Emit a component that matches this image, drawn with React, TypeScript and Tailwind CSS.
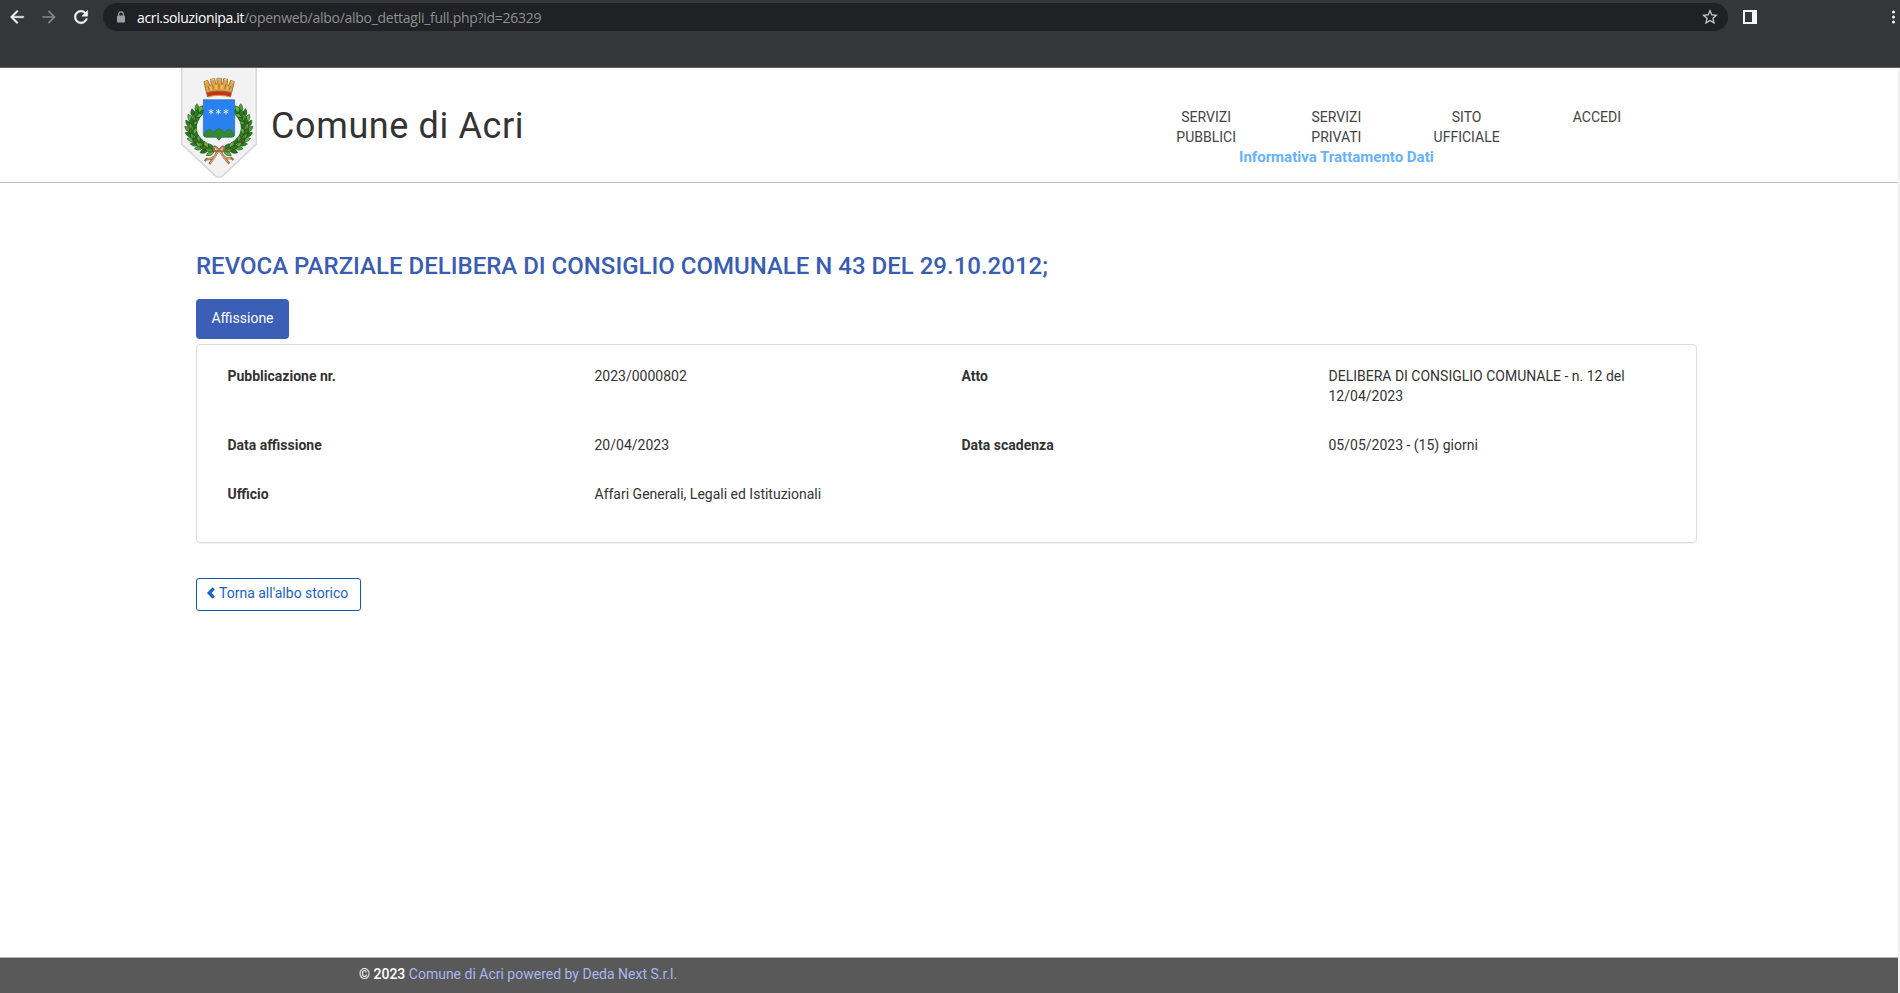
import React from "react";

type Leaf = { x: number; y: number; angle: number; tone: string };

const tones = ["#4ba536", "#23781f", "#62b840", "#2a7f27"];

function wreathLeaves(): Leaf[] {
  const leaves: Leaf[] = [];
  const steps = 11;
  for (let i = 0; i < steps; i++) {
    const t = i / (steps - 1);
    const u = 1 - t;
    const p = [[82, 158], [44, 205], [72, 262], [132, 272]];
    const x = u * u * u * p[0][0] + 3 * u * u * t * p[1][0] + 3 * u * t * t * p[2][0] + t * t * t * p[3][0];
    const y = u * u * u * p[0][1] + 3 * u * u * t * p[1][1] + 3 * u * t * t * p[2][1] + t * t * t * p[3][1];
    const dx = 3 * u * u * (p[1][0] - p[0][0]) + 6 * u * t * (p[2][0] - p[1][0]) + 3 * t * t * (p[3][0] - p[2][0]);
    const dy = 3 * u * u * (p[1][1] - p[0][1]) + 6 * u * t * (p[2][1] - p[1][1]) + 3 * t * t * (p[3][1] - p[2][1]);
    const back = (Math.atan2(-dy, -dx) * 180) / Math.PI;
    leaves.push({ x, y, angle: back - 42, tone: tones[i % 4] });
    leaves.push({ x, y, angle: back + 42, tone: tones[(i + 1) % 4] });
    leaves.push({ x, y, angle: back, tone: tones[(i + 2) % 4] });
  }
  return leaves;
}

const leaves = wreathLeaves();

function Branch() {
  return (
    <g>
      {leaves.map((l, i) => (
        <g key={i} transform={`translate(${l.x} ${l.y}) rotate(${l.angle})`}>
          <path d="M0 0Q12 -13 27 0Q12 12 0 0Z" fill={l.tone} stroke="#123c12" strokeWidth="1.6" />
        </g>
      ))}
      <path d="M80 160C44 205 72 262 132 272" fill="none" stroke="#6b4a24" strokeWidth="2.5" />
      <circle cx="60" cy="205" r="3" fill="#a83a2a" />
      <circle cx="78" cy="242" r="3" fill="#a83a2a" />
      <circle cx="104" cy="262" r="3" fill="#a83a2a" />
    </g>
  );
}

function Crest() {
  return (
    <svg className="block h-[111px] w-[76px] shrink-0" viewBox="33 24 228 333">
      <path d="M33 24H261V254L158 351Q147 357 136 351L33 254Z" fill="#d9d9d9" />
      <path d="M39 24H255V251L155 345Q147 350 139 345L39 251Z" fill="#f2f2f2" stroke="#fafafa" strokeWidth="2" />
      <Branch />
      <g transform="translate(293 0) scale(-1 1)">
        <Branch />
      </g>
      <path d="M100 119H194V222Q194 232 184 232H155L147 241L139 232H110Q100 232 100 222Z" fill="#2a80ee" stroke="#17579e" strokeWidth="1.5" />
      <path d="M101 225Q108 210 118 207Q126 210 131 218Q138 207 147 205Q156 207 163 218Q169 210 177 207Q187 210 193 225Q193 231 184 231H155L147 240L139 231H110Q101 231 101 225Z" fill="#348a2c" stroke="#1c6322" strokeWidth="1" />
      {[123, 145, 168].map((x) => (
        <path
          key={x}
          transform={`translate(${x} 155)`}
          d="M0 -8V8M-7 -4L7 4M-7 4L7 -4"
          stroke="#dcecff"
          strokeWidth="3"
        />
      ))}
      <path d="M109 98L102 65L113 61L119 76L124 74L122 58L134 56L137 72H141V55H154V72H158L161 56L173 58L171 74L176 76L182 61L193 65L185 98Q147 88 109 98Z" fill="#e0a748" stroke="#7d4a12" strokeWidth="2" />
      <path d="M114 78L118 91M128 74L130 88M147 71V87M167 74L165 88M181 78L177 91" stroke="#96601e" strokeWidth="2.5" />
      <path d="M104 67L112 64M124 60L133 58M143 57H152M162 58L171 60M183 64L191 67M121 80L124 89M138 76L139 86M156 76L155 86M174 80L171 89" stroke="#f6d27a" strokeWidth="3" />
      <path d="M110 99Q147 89 184 99L182 110Q147 100 112 110Z" fill="#cf2a1e" stroke="#8c5a18" strokeWidth="2" />
      <path d="M114 111Q147 101 180 111" fill="none" stroke="#d99a34" strokeWidth="3" />
      <g fill="none">
        <path
          d="M147 271Q131 250 132 268Q134 279 147 271Q163 250 162 268Q160 279 147 271M143 274Q132 300 110 297L104 303M143 275Q134 292 118 312M151 274Q162 300 184 294L190 300M151 275Q160 292 178 311"
          stroke="#9a6d45"
          strokeWidth="7"
        />
        <path
          d="M143 276Q133 296 112 298M151 276Q161 296 182 296M133 263Q139 262 145 270M161 263Q155 262 149 270M138 288L121 309M156 288L175 308"
          stroke="#dfbd92"
          strokeWidth="3"
        />
      </g>
    </svg>
  );
}

function BrowserBar() {
  return (
    <div className="flex h-[68px] shrink-0 items-start border-b border-[#606164] bg-[#35363a]">
      <div className="flex h-[34px] w-[103px] shrink-0 items-center gap-3 pl-[7px]">
        <svg className="size-5 shrink-0" viewBox="0 0 24 24" fill="#f1f3f4" stroke="#f1f3f4" strokeWidth="0.5">
          <path d="M20 11H7.83l5.59-5.59L12 4l-8 8 8 8 1.41-1.41L7.83 13H20v-2z" />
        </svg>
        <svg className="size-5 shrink-0" viewBox="0 0 24 24" fill="#85868a">
          <path d="M12 4l-1.41 1.41L16.17 11H4v2h12.17l-5.58 5.59L12 20l8-8z" />
        </svg>
        <svg className="size-5 shrink-0" viewBox="0 0 24 24" fill="#f1f3f4" stroke="#f1f3f4" strokeWidth="0.6">
          <path d="M17.65 6.35C16.2 4.9 14.21 4 12 4c-4.42 0-7.99 3.58-7.99 8s3.57 8 7.99 8c3.73 0 6.84-2.55 7.73-6h-2.08c-.82 2.33-3.04 4-5.65 4-3.31 0-6-2.69-6-6s2.69-6 6-6c1.66 0 3.14.69 4.22 1.78L13 11h7V4l-2.35 2.35z" />
        </svg>
      </div>
      <div className="mt-[3px] flex h-7 w-[1625px] shrink-0 items-center justify-between rounded-full bg-[#202124] pr-2.5 pl-[13px]">
        <div className="flex items-center">
          <svg className="block h-3 w-2.5" viewBox="0 0 10 12">
            <path d="M2.7 5V3.2a2.3 2.3 0 0 1 4.6 0V5" fill="none" stroke="#9aa0a6" strokeWidth="1.2" />
            <rect x="1" y="4.4" width="8" height="7.2" rx="0.8" fill="#9aa0a6" />
          </svg>
          <span className="ml-[11px] pt-px text-[14px] leading-5 font-normal whitespace-nowrap text-[#8d9094] [font-family:'Open_Sans','Noto_Sans',sans-serif]">
            <span className="inline-block w-[107px] tracking-[-0.35px] text-white">acri.soluzionipa.it</span>
            <span className="tracking-[-0.28px]">/openweb/albo/albo_dettagli_full.php?id=26329</span>
          </span>
        </div>
        <svg className="block size-4" viewBox="2 2 20 20" fill="#c4c7cb">
          <path d="M22 9.24l-7.19-.62L12 2 9.19 8.63 2 9.24l5.46 4.73L5.82 21 12 17.27 18.18 21l-1.63-7.03L22 9.24zM12 15.4l-3.76 2.27 1-4.28-3.32-2.88 4.38-.38L12 6.1l1.71 4.04 4.38.38-3.32 2.88 1 4.28L12 15.4z" />
        </svg>
      </div>
      <div className="flex h-[34px] flex-1 items-center justify-between pr-[5px] pl-[15px]">
        <svg className="block size-3.5" viewBox="0 0 14 14">
          <path d="M0 0H14V14H0ZM2 2V12H9V2Z" fill="#f4f5f7" fillRule="evenodd" />
        </svg>
        <svg className="block h-3.5 w-[3px]" viewBox="0 0 3 14" fill="#f1f3f4">
          <circle cx="1.5" cy="2" r="1.5" />
          <circle cx="1.5" cy="7" r="1.5" />
          <circle cx="1.5" cy="12" r="1.5" />
        </svg>
      </div>
    </div>
  );
}

const nav = [
  ["SERVIZI", "PUBBLICI"],
  ["SERVIZI", "PRIVATI"],
  ["SITO", "UFFICIALE"],
  ["ACCEDI"],
];

function Header() {
  return (
    <header className="flex h-[115px] shrink-0 items-start border-b border-[#bbbbbb] pl-[181px]">
      <Crest />
      <h1 className="mt-[34px] ml-[14px] w-[870px] text-[36px] leading-[48px] font-normal tracking-[0.62px] text-[#333333]">Comune di Acri</h1>
      <nav className="mt-[39px] w-[521px]">
        <ul className="flex h-10 text-center text-[14px] leading-5 text-[#444444]">
          {nav.map((words, i) => (
            <li key={i} className="w-[130.4px]">
              {words.map((w) => (
                <div key={w}>{w}</div>
              ))}
            </li>
          ))}
        </ul>
        <a className="ml-[98px] block text-[15px] leading-5 font-bold text-[#66b2ff]">Informativa Trattamento Dati</a>
      </nav>
    </header>
  );
}

const rows = [
  ["Pubblicazione nr.", "2023/0000802", "Atto", "DELIBERA DI CONSIGLIO COMUNALE - n. 12 del 12/04/2023"],
  ["Data affissione", "20/04/2023", "Data scadenza", "05/05/2023 - (15) giorni"],
  ["Ufficio", "Affari Generali, Legali ed Istituzionali", "", ""],
];

function Details() {
  return (
    <section className="mt-[5px] flex h-[199px] w-[1501px] flex-col gap-[29px] rounded-[4px] border border-[#dddddd] pt-[21px] pl-[30.5px] text-[14px] leading-5 text-[#333333] shadow-[0_1px_1px_rgba(0,0,0,0.05)]">
      {rows.map((cells, r) => (
        <div key={r} className="flex">
          {cells.map((cell, c) => (
            <div key={c} className={c % 2 === 0 ? "w-[367px] shrink-0 font-bold" : "w-[367px] shrink-0 pr-[50px]"}>
              {cell}
            </div>
          ))}
        </div>
      ))}
    </section>
  );
}

export default function App() {
  return (
    <div className="flex h-[993px] w-[1900px] flex-col overflow-hidden bg-white [font-family:Roboto,'Liberation_Sans',sans-serif]">
      <BrowserBar />
      <div className="flex flex-1 border-r-2 border-[#f1f1f1]">
        <div className="flex flex-1 flex-col">
          <Header />
          <main className="flex-1 pl-[196px]">
            <h2 className="pt-[69px] text-[24px] leading-[28px] font-medium whitespace-nowrap text-[#3a5db4]">
              REVOCA PARZIALE DELIBERA DI CONSIGLIO COMUNALE N 43 DEL 29.10.2012;
            </h2>
            <button className="mt-[19px] block h-10 w-[93px] rounded-[4px] bg-[#3b5eb7] pb-0.5 text-[14px] leading-5 text-white">
              Affissione
            </button>
            <Details />
            <button className="mt-[35px] flex h-[33px] w-[165px] items-center rounded-[3px] border border-[#0b5cbb] pb-[3px] pl-[9px] text-[14px] leading-5 whitespace-nowrap text-[#1a62c6]">
              <svg className="mr-[3px] block h-3 w-2.5" viewBox="0 0 10 12">
                <path d="M7.8 1.4L3.2 6L7.8 10.6" fill="none" stroke="#1a62c6" strokeWidth="3.2" />
              </svg>
              Torna all'albo storico
            </button>
          </main>
          <footer className="h-9 shrink-0 border-t border-[#b5b5b5] bg-[#595959] pt-1.5 pl-[359px] text-[14px] leading-5 text-[#a9b6ee]">
            <span className="font-medium text-white">© 2023</span> Comune di Acri powered by Deda Next S.r.l.
          </footer>
        </div>
      </div>
    </div>
  );
}
